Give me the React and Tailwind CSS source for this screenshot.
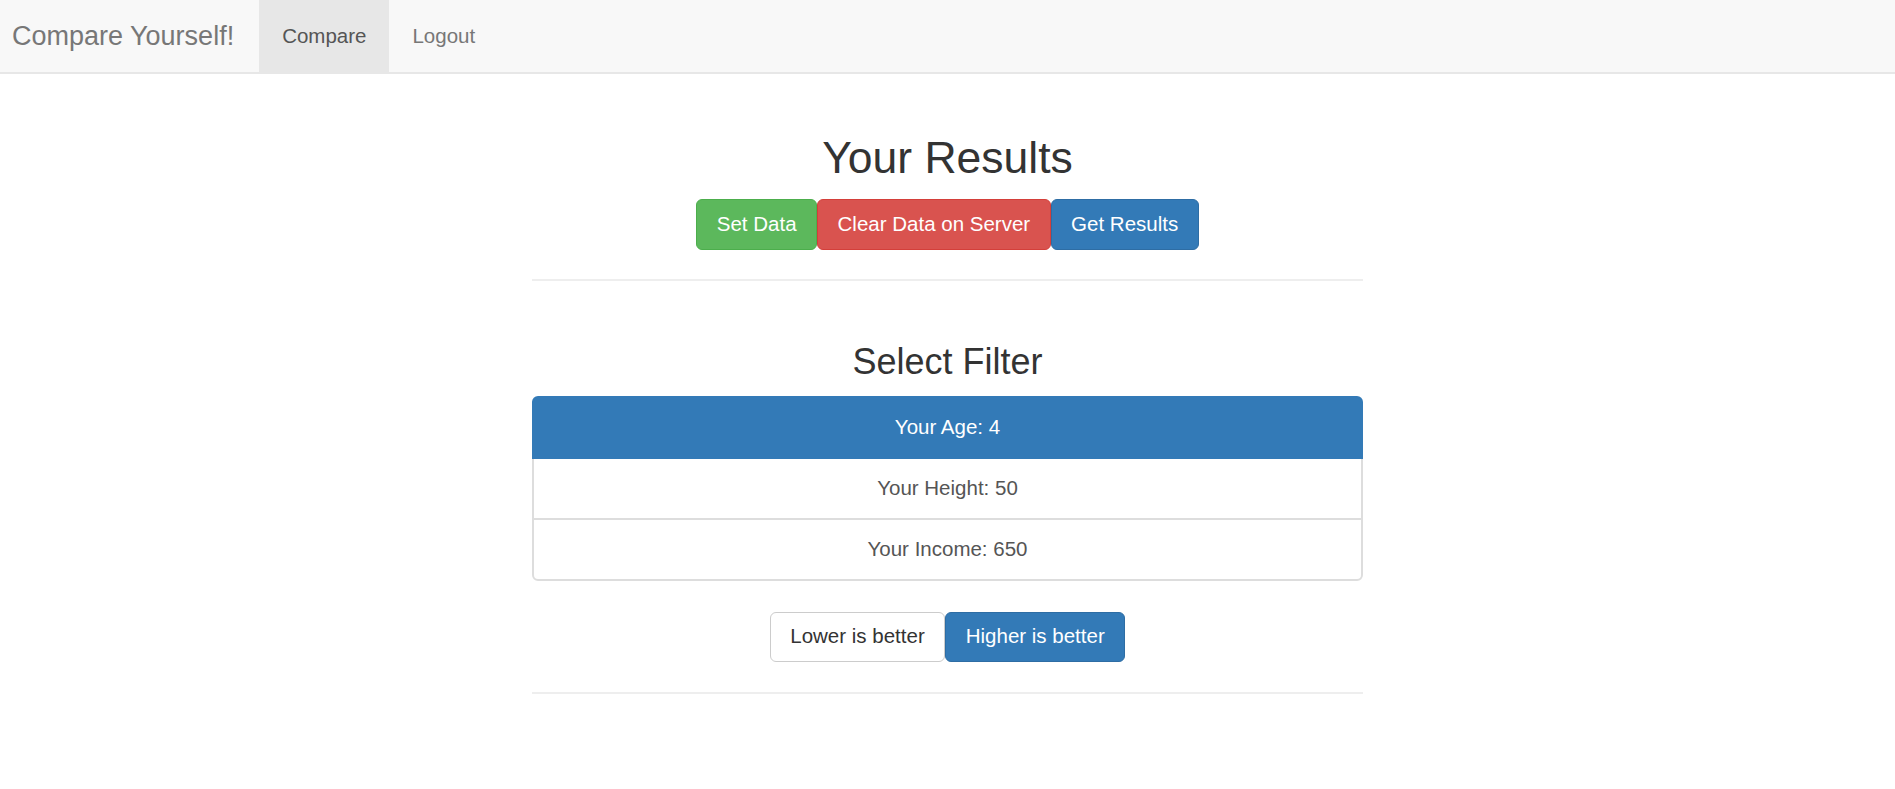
import { useState } from 'react';

const filters = [
  { key: 'age', label: 'Your Age', value: 4 },
  { key: 'height', label: 'Your Height', value: 50 },
  { key: 'income', label: 'Your Income', value: 650 },
];

const App = () => {
  const [selected, setSelected] = useState('age');
  const [higherBetter, setHigherBetter] = useState(true);

  return (
    <div className="min-h-screen bg-white text-[#333] font-['Liberation_Sans',Arial,sans-serif] text-[20.5px]">
      <nav className="h-[74px] bg-[#f8f8f8] border-b-2 border-[#e7e7e7] flex items-stretch">
        <a href="#" className="flex items-center pl-[12px] pr-[25px] text-[27px] text-[#777]">
          Compare Yourself!
        </a>
        <ul className="flex items-stretch">
          <li className="flex items-center px-[23px] bg-[#e7e7e7] text-[#555]">Compare</li>
          <li className="flex items-center px-[23px] text-[#777]">Logout</li>
        </ul>
      </nav>

      <main className="w-[831px] mx-auto pt-[60px]">
        <h1 className="text-center text-[44.5px] leading-[1.1] text-[#333]">Your Results</h1>
        <div className="mt-[16px] flex justify-center">
          <button className="h-[51px] px-[19.5px] rounded-[6px] border border-[#4cae4c] bg-[#5cb85c] text-white">
            Set Data
          </button>
          <button className="h-[51px] px-[19.5px] rounded-[6px] border border-[#d43f3a] bg-[#d9534f] text-white">
            Clear Data on Server
          </button>
          <button className="h-[51px] px-[19.5px] rounded-[6px] border border-[#2e6da4] bg-[#337ab7] text-white">
            Get Results
          </button>
        </div>
        <hr className="mt-[29px] border-0 border-t-2 border-[#eeeeee]" />

        <h2 className="mt-[61px] text-center text-[36px] leading-[1.1] text-[#333]">Select Filter</h2>
        <div className="mt-[14px] flex flex-col">
          {filters.map((f, i) => {
            const active = selected === f.key;
            return (
              <div
                key={f.key}
                onClick={() => setSelected(f.key)}
                className={`relative h-[63px] flex items-center justify-center border-2 cursor-pointer ${
                  i > 0 ? '-mt-[2px]' : ''
                } ${i === 0 ? 'rounded-t-[6px]' : ''} ${i === filters.length - 1 ? 'rounded-b-[6px]' : ''} ${
                  active ? 'z-10 bg-[#337ab7] border-[#337ab7] text-white' : 'bg-white border-[#dddddd] text-[#555]'
                }`}
              >
                {f.label}: {f.value}
              </div>
            );
          })}
        </div>

        <div className="mt-[31px] flex justify-center">
          <button
            onClick={() => setHigherBetter(false)}
            className={`h-[50px] px-[19.5px] rounded-[6px] border ${
              !higherBetter ? 'bg-[#337ab7] border-[#2e6da4] text-white' : 'bg-white border-[#cccccc] text-[#333]'
            }`}
          >
            Lower is better
          </button>
          <button
            onClick={() => setHigherBetter(true)}
            className={`h-[50px] px-[19.5px] rounded-[6px] border ${
              higherBetter ? 'bg-[#337ab7] border-[#2e6da4] text-white' : 'bg-white border-[#cccccc] text-[#333]'
            }`}
          >
            Higher is better
          </button>
        </div>
        <hr className="mt-[30px] border-0 border-t-2 border-[#eeeeee]" />
      </main>
    </div>
  );
};

export default App;
